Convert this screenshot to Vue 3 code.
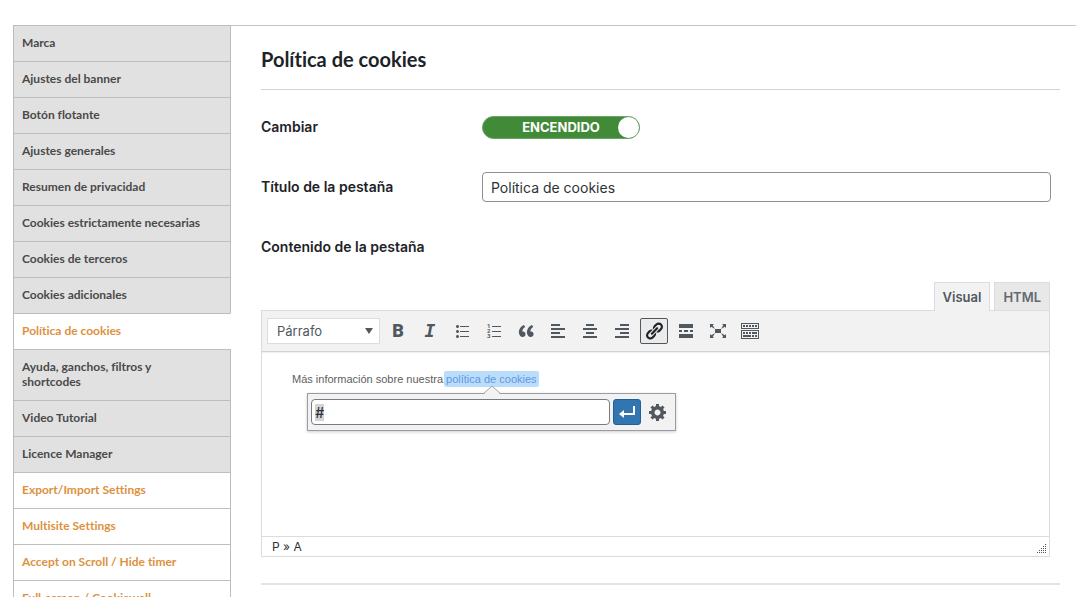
<script setup>
import { onMounted, ref } from 'vue'

const sections = [
  { label: 'Marca' },
  { label: 'Ajustes del banner' },
  { label: 'Botón flotante' },
  { label: 'Ajustes generales' },
  { label: 'Resumen de privacidad' },
  { label: 'Cookies estrictamente necesarias' },
  { label: 'Cookies de terceros' },
  { label: 'Cookies adicionales' },
  { label: 'Política de cookies', active: true },
  { label: 'Ayuda, ganchos, filtros y shortcodes' },
  { label: 'Video Tutorial' },
  { label: 'Licence Manager' },
  { label: 'Export/Import Settings', premium: true },
  { label: 'Multisite Settings', premium: true },
  { label: 'Accept on Scroll / Hide timer', premium: true },
  { label: 'Full-screen / Cookiewall', premium: true },
]

const tools = [
  { name: 'Negrita', glyph: 'B', style: 'bold' },
  { name: 'Cursiva', glyph: 'I', style: 'italic' },
  { name: 'Lista con viñetas', path: 'M5.5 7C4.67 7 4 6.33 4 5.5 4 4.68 4.67 4 5.5 4 6.32 4 7 4.68 7 5.5 7 6.33 6.32 7 5.5 7zM8 5h9v1H8V5zm-2.5 7c-.83 0-1.5-.67-1.5-1.5C4 9.68 4.67 9 5.5 9c.82 0 1.5.68 1.5 1.5 0 .83-.68 1.5-1.5 1.5zM8 10h9v1H8v-1zm-2.5 7c-.83 0-1.5-.67-1.5-1.5 0-.82.67-1.5 1.5-1.5.82 0 1.5.68 1.5 1.5 0 .83-.68 1.5-1.5 1.5zM8 15h9v1H8v-1z' },
  { name: 'Lista numerada', numbers: true, path: 'M8 5h9v1H8zM8 10h9v1H8zM8 15h9v1H8z' },
  { name: 'Cita', path: 'M9.49 13.22c0-.74-.2-1.38-.61-1.9-.62-.78-1.83-.88-2.53-.72-.29-1.65 1.11-3.75 2.92-4.65L7.88 4c-2.73 1.3-5.42 4.28-4.96 8.05C3.21 14.43 4.59 16 6.54 16c.85 0 1.56-.25 2.12-.75s.83-1.18.83-2.03zm8.05 0c0-.74-.2-1.38-.61-1.9-.63-.78-1.83-.88-2.53-.72-.29-1.65 1.11-3.75 2.92-4.65L15.93 4c-2.73 1.3-5.41 4.28-4.95 8.05.29 2.38 1.66 3.95 3.61 3.95.85 0 1.56-.25 2.12-.75s.83-1.18.83-2.03z' },
  { name: 'Alinear a la izquierda', path: 'M12 5V3H3v2h9zm5 4V7H3v2h14zm-5 4v-2H3v2h9zm5 4v-2H3v2h14z' },
  { name: 'Centrar', path: 'M14 5V3H6v2h8zm3 4V7H3v2h14zm-3 4v-2H6v2h8zm3 4v-2H3v2h14z' },
  { name: 'Alinear a la derecha', path: 'M17 5V3H8v2h9zm0 4V7H3v2h14zm0 4v-2H8v2h9zm0 4v-2H3v2h14z' },
  { name: 'Insertar enlace', pressed: true, path: 'M17.74 2.76c1.68 1.69 1.68 4.41 0 6.1l-1.53 1.52c-1.12 1.12-2.7 1.47-4.14 1.09l2.62-2.61.76-.77.76-.76c.84-.84.84-2.2 0-3.04-.84-.85-2.2-.85-3.04 0l-.77.76-3.38 3.38c-.37-1.44-.02-3.02 1.1-4.14l1.52-1.53c1.69-1.68 4.42-1.68 6.1 0zM8.59 13.43l5.34-5.34c.42-.42.42-1.1 0-1.52-.44-.43-1.13-.39-1.53 0l-5.33 5.34c-.42.42-.42 1.1 0 1.52.44.43 1.13.39 1.52 0zm-.76 2.29l4.14-4.15c.38 1.44.03 3.02-1.09 4.14l-1.52 1.53c-1.69 1.68-4.41 1.68-6.1 0-1.68-1.68-1.68-4.42 0-6.1l1.53-1.52c1.12-1.12 2.7-1.47 4.14-1.1l-4.14 4.15c-.85.84-.85 2.2 0 3.05.84.84 2.2.84 3.04 0z' },
  { name: 'Leer más', path: 'M17 7V3H3v4h14zM6 11V9H3v2h3zm6 0V9H8v2h4zm5 0V9h-3v2h3zm0 6v-4H3v4h14z' },
  { name: 'Pantalla completa', path: 'M7 8h6v4H7zm-5 5v4h4l-1.2-1.2L7 12l-3.8 2.2M14 17h4v-4l-1.2 1.2L13 12l2.2 3.8M14 3l1.3 1.3L13 8l3.8-2.2L18 7V3M6 3H2v4l1.2-1.2L7 8 4.7 4.3' },
  { name: 'Mostrar más botones', path: 'M19 2v6H1V2h18zm-1 5V3H2v4h16zM5 4v2H3V4h2zm3 0v2H6V4h2zm3 0v2H9V4h2zm3 0v2h-2V4h2zm3 0v2h-2V4h2zm2 5v9H1V9h18zm-1 8v-7H2v7h16zM5 11v2H3v-2h2zm3 0v2H6v-2h2zm3 0v2H9v-2h2zm6 0v2h-5v-2h5zm-6 3v2H3v-2h8zm3 0v2h-2v-2h2zm3 0v2h-2v-2h2z' },
]

const enabled = ref(true)
const tabTitle = ref('Política de cookies')
const linkUrl = ref('#')
const linkInput = ref(null)

onMounted(() => {
  linkInput.value.focus()
  linkInput.value.select()
})
</script>

<template>
  <div class="page">
    <nav class="sections" aria-label="Ajustes">
      <a
        v-for="item in sections"
        :key="item.label"
        href="#"
        class="section"
        :class="{ active: item.active, premium: item.premium }"
      >{{ item.label }}</a>
    </nav>

    <main class="content">
      <h1>Política de cookies</h1>

      <div class="form">
        <div class="row">
          <label class="name" for="enabled">Cambiar</label>
          <label class="switch">
            <input id="enabled" v-model="enabled" type="checkbox">
            <span class="state">ENCENDIDO</span>
            <span class="knob"></span>
          </label>
        </div>
        <div class="row">
          <label class="name" for="tab-title">Título de la pestaña</label>
          <input id="tab-title" v-model="tabTitle" class="field" type="text">
        </div>
        <div class="row">
          <span class="name">Contenido de la pestaña</span>
        </div>

        <div class="editor">
          <div class="modes">
            <button type="button" class="mode current">Visual</button>
            <button type="button" class="mode">HTML</button>
          </div>
          <div class="frame">
            <div class="toolbar">
              <div class="format">
                <select aria-label="Formato">
                  <option>Párrafo</option>
                </select>
                <svg class="arrow" viewBox="0 0 8 6"><path d="M0 0h8L4 6z" /></svg>
              </div>
              <button
                v-for="tool in tools"
                :key="tool.name"
                type="button"
                class="tool"
                :class="{ pressed: tool.pressed }"
                :aria-label="tool.name"
              >
                <span v-if="tool.glyph" :class="tool.style">{{ tool.glyph }}</span>
                <svg v-else viewBox="0 0 20 20">
                  <g v-if="tool.numbers" class="digits">
                    <text x="3" y="7">1</text>
                    <text x="3" y="12">2</text>
                    <text x="3" y="17">3</text>
                  </g>
                  <path :d="tool.path" />
                </svg>
              </button>
            </div>

            <div class="document">
              <p>
                Más información sobre nuestra
                <span class="anchor">
                  <a href="#">política de cookies</a>
                  <span class="link-box">
                    <svg class="pointer" viewBox="0 0 18 10"><path class="fill" d="M0 10L9 1l9 9z" /><path class="line" d="M0 9L9 1l9 8" /></svg>
                    <input ref="linkInput" v-model="linkUrl" type="text" aria-label="URL del enlace">
                    <button type="button" class="apply" aria-label="Aplicar">
                      <svg viewBox="0 0 20 20"><path d="M16 4h2v9H7v3l-5-4 5-4v3h9V4z" /></svg>
                    </button>
                    <button type="button" class="options" aria-label="Opciones de enlace">
                      <svg viewBox="0 0 20 20"><path d="M18 12h-2.18c-.17.7-.44 1.35-.81 1.93l1.54 1.54-2.1 2.1-1.54-1.54c-.58.36-1.23.63-1.91.79V19H8v-2.18c-.68-.16-1.33-.43-1.91-.79l-1.54 1.54-2.12-2.12 1.54-1.54c-.36-.58-.63-1.23-.79-1.91H1V9.03h2.17c.16-.7.44-1.35.8-1.94L2.43 5.55l2.1-2.1 1.54 1.54c.58-.37 1.24-.64 1.93-.81V2h3v2.18c.68.16 1.33.43 1.91.79l1.54-1.54 2.12 2.12-1.54 1.54c.36.59.64 1.24.8 1.94H18V12zm-8.5 1.5c1.66 0 3-1.34 3-3s-1.34-3-3-3-3 1.34-3 3 1.34 3 3 3z" /></svg>
                    </button>
                  </span>
                </span>
              </p>
            </div>

            <div class="status">
              <span>P » A</span>
              <svg class="grip" viewBox="0 0 10 10">
                <path d="M8 0h1v1h-1zM6 2h1v1h-1zM8 2h1v1h-1zM4 4h1v1h-1zM6 4h1v1h-1zM8 4h1v1h-1zM2 6h1v1h-1zM4 6h1v1h-1zM6 6h1v1h-1zM8 6h1v1h-1zM0 8h1v1h-1zM2 8h1v1h-1zM4 8h1v1h-1zM6 8h1v1h-1zM8 8h1v1h-1z" />
              </svg>
            </div>
          </div>
        </div>
      </div>
      <hr>
    </main>
  </div>
</template>

<style>
body {
  background: #fff;
  overflow: hidden;
}
</style>

<style scoped>
.page, .page * {
  box-sizing: border-box;
}
.page {
  display: grid;
  grid-template-columns: 218px 1fr;
  align-items: start;
  padding: 25px 0 0 13px;
  height: 100vh;
  font-family: Inter, "Liberation Sans", sans-serif;
  font-size: 14px;
  color: #1d2327;
}
button, input, select {
  font-family: inherit;
  margin: 0;
}
.sections {
  display: flex;
  flex-direction: column;
  border-left: 1px solid #bdbdbd;
  font-family: Lato, "Open Sans", sans-serif;
  font-variant-ligatures: none;
}
.section {
  padding: 9px 20px 11px 8px;
  border-top: 1px solid #bdbdbd;
  border-right: 1px solid #bdbdbd;
  background: #e1e1e1;
  color: #4a4a4a;
  font-size: 12px;
  line-height: 15px;
  font-weight: 700;
  text-decoration: none;
}
.section.active, .section.premium {
  background: #fff;
  color: #dd9140;
}
.section.active {
  border-right-color: #fff;
}
.content {
  border-top: 1px solid #c3c4c7;
  padding: 0 16px 0 30px;
}
h1 {
  margin: 0;
  padding: 20px 0 17px;
  border-bottom: 1px solid #d2d3d5;
  font-family: Lato, "Open Sans", sans-serif;
  font-variant-ligatures: none;
  font-size: 20px;
  line-height: 26px;
  font-weight: 700;
}
.form {
  padding: 22px 9px 0 0;
}
.row {
  display: grid;
  grid-template-columns: 221px 1fr;
  align-items: center;
  height: 30px;
  margin-bottom: 30px;
}
.name {
  line-height: 16px;
  font-weight: 600;
}
.switch {
  position: relative;
  display: flex;
  align-items: center;
  justify-content: center;
  width: 158px;
  height: 23px;
  border: 1px solid #6ba467;
  border-radius: 12px;
  background: #418a38;
  color: #fff;
  font-size: 13px;
  font-weight: 700;
}
.switch input {
  position: absolute;
  inset: 0;
  width: 100%;
  height: 100%;
  opacity: 0;
}
.knob {
  position: absolute;
  right: 0;
  top: 0;
  width: 21px;
  height: 21px;
  border-radius: 50%;
  background: #fff;
}
.field {
  width: 100%;
  height: 30px;
  padding: 0 8px;
  border: 1px solid #8c8f94;
  border-radius: 4px;
  background: #fff;
  color: #2c3338;
  font-size: 14px;
}
.editor {
  margin: -10px 1px 0 0;
}
.modes {
  display: flex;
  justify-content: flex-end;
  gap: 4px;
}
.mode {
  height: 28px;
  padding: 0 8px;
  border: 1px solid #dcdcde;
  border-bottom: 0;
  background: #e8e8e8;
  color: #646970;
  font-size: 13px;
  font-weight: 600;
}
.mode.current {
  position: relative;
  height: 29px;
  margin-bottom: -1px;
  background: #f2f2f2;
  color: #50575e;
}
.frame {
  border: 1px solid #dcdcde;
}
.toolbar {
  display: flex;
  align-items: center;
  gap: 4px;
  height: 41px;
  padding: 0 5px;
  border-bottom: 1px solid #d2d2d4;
  background: #f2f2f2;
  box-shadow: 0 1px 1px rgba(0, 0, 0, 0.06);
}
.format {
  position: relative;
  width: 113px;
  height: 26px;
}
.format select {
  width: 100%;
  height: 100%;
  padding: 0 9px;
  border: 1px solid #dcdcde;
  border-radius: 0;
  background: #fff;
  color: #50575e;
  font-size: 13px;
  appearance: none;
}
.arrow {
  position: absolute;
  right: 7px;
  top: 10px;
  width: 8px;
  height: 6px;
  fill: #50575e;
  pointer-events: none;
}
.tool {
  display: flex;
  align-items: center;
  justify-content: center;
  width: 28px;
  height: 26px;
  padding: 0;
  border: 1px solid transparent;
  border-radius: 2px;
  background: transparent;
  color: #50575e;
}
.tool svg, .link-box button svg {
  display: block;
  width: 20px;
  height: 20px;
  fill: currentColor;
}
.tool.pressed {
  border-color: #50575e;
  background: #ebebeb;
  color: #1d2327;
}
.digits {
  font-family: Roboto, sans-serif;
  font-size: 6px;
  font-weight: 700;
}
.bold {
  font-family: Roboto, sans-serif;
  font-size: 18px;
  font-weight: 900;
  line-height: 20px;
}
.italic {
  font-family: "DejaVu Sans Mono", monospace;
  font-size: 18px;
  font-weight: 700;
  font-style: italic;
  line-height: 20px;
}
.document {
  height: 184px;
  padding: 19px 30px;
  color: #606060;
  font-family: "Liberation Sans", sans-serif;
  font-size: 11px;
  line-height: 16px;
}
.document p {
  margin: 0;
}
.anchor {
  position: relative;
  display: inline-block;
}
.anchor a {
  display: block;
  margin-left: -2px;
  padding: 0 2px;
  border-radius: 2px;
  background: #bbddfb;
  color: #5b9ae0;
  line-height: 16px;
  text-decoration: none;
}
.link-box {
  position: absolute;
  top: 22px;
  left: 50%;
  display: flex;
  align-items: center;
  gap: 3px;
  width: 369px;
  height: 38px;
  margin-left: -185px;
  padding: 0 3px;
  border: 1px solid #9a9ba3;
  background: #f2f2f2;
  box-shadow: 0 1px 3px rgba(0, 0, 0, 0.2);
}
.pointer {
  position: absolute;
  left: 50%;
  top: -9px;
  width: 18px;
  height: 10px;
  margin-left: -9px;
}
.pointer .fill {
  fill: #f2f2f2;
}
.pointer .line {
  fill: none;
  stroke: #a0a1a8;
}
.link-box input {
  width: 300px;
  height: 26px;
  padding: 0 3px;
  border: 1px solid #777b82;
  border-radius: 4px;
  outline: 0;
  background: #fff;
  color: #2c3338;
  font-family: Inter, sans-serif;
  font-size: 14px;
  font-weight: 500;
}
.link-box input::selection {
  background: #d4d4d4;
  color: #2c3338;
}
.link-box button {
  display: flex;
  align-items: center;
  justify-content: center;
  width: 28px;
  height: 26px;
  padding: 0;
  border: 0;
  border-radius: 3px;
  background: transparent;
  color: #50575e;
}
.link-box .apply {
  border: 1px solid #245f93;
  background: #3276b1;
  color: #fff;
}
.status {
  display: flex;
  align-items: center;
  justify-content: space-between;
  height: 20px;
  padding: 0 1px 0 10px;
  border-top: 1px solid #dcdcde;
  color: #2c3338;
  font-size: 12px;
}
.grip {
  align-self: flex-end;
  width: 10px;
  height: 10px;
  margin: 0 1px 2px 0;
  fill: #50575e;
}
hr {
  height: 2px;
  margin: 26px 0 0;
  border: 0;
  background: #e4e4e5;
}
</style>
